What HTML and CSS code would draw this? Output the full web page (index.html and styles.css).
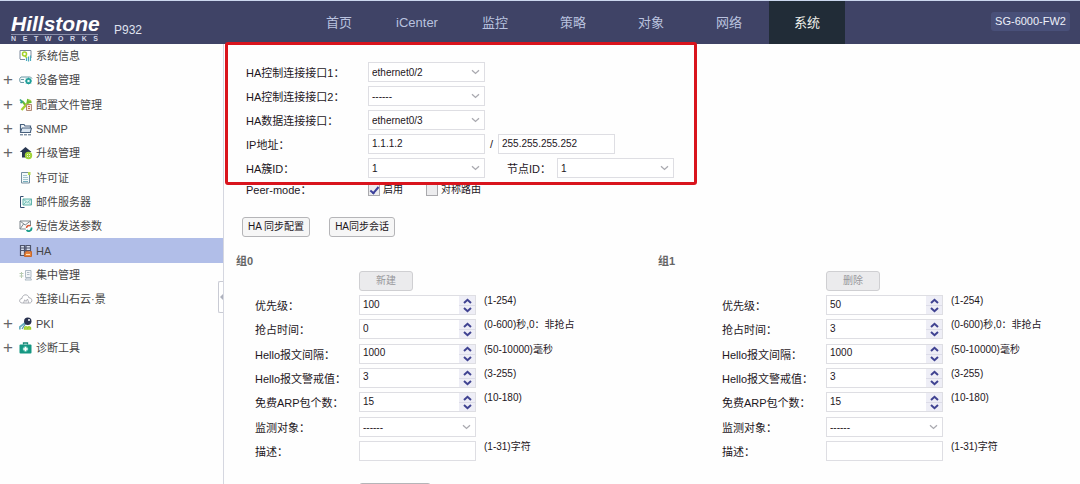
FILE: index.html
```html
<!DOCTYPE html>
<html lang="zh-CN">
<head>
<meta charset="utf-8">
<title>Hillstone P932</title>
<link rel="stylesheet" href="styles.css">
</head>
<body>
<svg class="defs" aria-hidden="true">
  <symbol id="down" viewBox="0 0 9 6"><path d="M1 1.2 4.5 4.4 8 1.2" fill="none" stroke="#aaaab0" stroke-width="1.3"/></symbol>
  <symbol id="spin-up" viewBox="0 0 9 6"><path d="M1 5 4.500 1.800 8 5" fill="none" stroke="#3f4291" stroke-width="2"/></symbol>
  <symbol id="spin-down" viewBox="0 0 9 6"><path d="M1 1 4.500 4.200 8 1" fill="none" stroke="#3f4291" stroke-width="2"/></symbol>
</svg>

<header class="topbar">
  <div class="brand">
    <div class="logo"><span class="logo-name">Hillstone</span><span class="logo-sub">N E T W O R K S</span></div>
    <span class="model">P932</span>
  </div>
  <nav class="topnav">
    <a href="#">首页</a><a href="#">iCenter</a><a href="#">监控</a><a href="#">策略</a><a href="#">对象</a><a href="#">网络</a><a href="#" class="active">系统</a>
  </nav>
  <span class="device">SG-6000-FW2</span>
</header>

<div class="layout">
  <aside class="sidebar">
    <ul class="menu">
      <li><a href="#"><span class="plus"></span><svg class="icon" viewBox="0 0 14 14"><path d="M1 10V1.500h11V9" fill="#fff" stroke="#7c8a9c"/><path d="M1 10.500h5" stroke="#7c8a9c"/><circle cx="5.500" cy="5" r="2" fill="#fff" stroke="#a4d22a" stroke-width="1.500"/><path d="M6 7 8 9" stroke="#a4d22a" stroke-width="1.500"/><path d="M7.500 12V9M9.500 12.500V7.500M11.500 12V6.500" stroke="#4ba9bd" stroke-width="1.200"/></svg>系统信息</a></li>
      <li><a href="#"><span class="plus">+</span><svg class="icon" viewBox="0 0 14 14"><path d="M5 9.500H1.500L.8 8V5.500L2 4h9.500l1.500 1.500" fill="#f5fbfc" stroke="#6c99a5"/><path d="M2 6.500h3" stroke="#6c99a5"/><circle cx="9.500" cy="8" r="2.300" fill="#fff" stroke="#1e9e98" stroke-width="1.600"/><path d="M9.500 4.500v7M6 8h7M7 5.500l5 5M12 5.500l-5 5" stroke="#1e9e98" stroke-width=".7"/><circle cx="9.500" cy="8" r="1" fill="#fff"/></svg>设备管理</a></li>
      <li><a href="#"><span class="plus">+</span><svg class="icon" viewBox="0 0 14 14"><path d="m3 3 7 8" stroke="#67b936" stroke-width="2"/><path d="M1 1.500 3 3.700 1.500 5" fill="none" stroke="#36a48a" stroke-width="1.800"/><path d="m11.500 2-9 10" stroke="#a8cf31" stroke-width="2.400"/><path d="M9 1 8.500 4.500 12.500 4" fill="none" stroke="#6fba30" stroke-width="1.800"/><path d="M7.500 6.500h5v6h-5z" fill="#f7e6dc" stroke="#b18976"/><path d="M9 8.500h2M9 10.500h2" stroke="#c86d45"/></svg>配置文件管理</a></li>
      <li><a href="#"><span class="plus">+</span><svg class="icon" viewBox="0 0 14 14"><path d="M1.500 10.500v-8H5L6 4h5.500v6.500z" fill="#f3f7fb" stroke="#48617e" stroke-width="1.200"/><path d="M3 6h9.500l-1.300 4.500H1.500z" fill="#dbe6f1" stroke="#48617e"/><path d="M1 12.800h3m1 0h3m1 0h3" stroke="#48617e"/></svg>SNMP</a></li>
      <li><a href="#"><span class="plus">+</span><svg class="icon" viewBox="0 0 14 14"><path d="M6.500 1 .8 6H3v5.500h6V6h3.500z" fill="#293751"/><circle cx="9.500" cy="9.500" r="2.700" fill="#fff" stroke="#a1d338" stroke-width="2"/><path d="M9.500 8v3M8 9.500h3" stroke="#a1d338"/></svg>升级管理</a></li>
      <li><a href="#"><span class="plus"></span><svg class="icon" viewBox="0 0 14 14"><path d="M2.500 1.500h8v10.500h-8z" fill="#f3f9fa" stroke="#748e9f"/><path d="M4 4.500h4M4 6.500h5M4 8.500h5" stroke="#a3c5cc"/><path d="M9 2.500h2.500" stroke="#b1d754" stroke-width="3"/><path d="M4 10.500h5" stroke="#76aebd"/></svg>许可证</a></li>
      <li><a href="#"><span class="plus"></span><svg class="icon" viewBox="0 0 14 14"><path d="M4.500 1.500h-3v11h4" fill="none" stroke="#354e71"/><path d="M4 4h8.500v6H4z" fill="#d9f1ed" stroke="#61b4ac"/><path d="m4 4 4.300 3.500L12.500 4M4 10l3-3m5.500 3-3-3" fill="none" stroke="#61b4ac" stroke-width=".8"/></svg>邮件服务器</a></li>
      <li><a href="#"><span class="plus"></span><svg class="icon" viewBox="0 0 14 14"><path d="M1 2h10.500v8H1z" fill="#fafafa" stroke="#7e878d"/><path d="m1 2 5.200 4L11.500 2M1 10l3.500-5" fill="none" stroke="#7e878d"/><circle cx="9.800" cy="9.500" r="3" fill="#fff"/><path d="M7.500 9a2.500 2.500 0 0 1 4-2" fill="none" stroke="#d65b38" stroke-width="1.500"/><path d="M12.300 8.500a2.700 2.700 0 0 1-4.700 2.500" fill="none" stroke="#189c8a" stroke-width="1.800"/></svg>短信发送参数</a></li>
      <li><a href="#" class="current"><span class="plus"></span><svg class="icon" viewBox="0 0 14 14"><path d="M1.500 1.500h4v10h-4zM7 1.500h4.500v8H7z" fill="#d6dded" stroke="#4e546c" stroke-width="1.200"/><path d="M1.500 4h10M1.500 6.500h10" stroke="#4e546c"/><path d="M6 8.500 8 7l2 1 2.500-.5v5H5.500z" fill="#e8843c" stroke="#c5682e"/><path d="M7 10.500h4" stroke="#ffe0b8"/></svg>HA</a></li>
      <li><a href="#"><span class="plus"></span><svg class="icon" viewBox="0 0 14 14"><path d="M.5 5.500h4M.5 8h4M2.500 4v6" stroke="#b8ccb2"/><path d="M6.500 2.500H12v7H6.500zM8 4.500h2.500M8 6.500h2.500M6 12l1.500-2h4l1 2z" fill="#f2f5f7" stroke="#a7b5bf" stroke-width=".9"/></svg>集中管理</a></li>
      <li><a href="#"><span class="plus"></span><svg class="icon" viewBox="0 0 14 14"><path d="M3.500 11C-.5 11 0 6.500 3 6.500 3.500 1.500 9.500 2 9.800 5.700 13.500 5.500 14 11 10.500 11z" fill="#fff" stroke="#abadb4"/><path d="m4.500 11 1.200-3.200L7 9.500 8.500 7l1.300 4" fill="none" stroke="#abadb4" stroke-width=".9"/></svg>连接山石云·景</a></li>
      <li><a href="#"><span class="plus">+</span><svg class="icon" viewBox="0 0 14 14"><path d="M6.500 5.500.8 10v2.500" fill="none" stroke="#69aebf" stroke-width="1.800"/><path d="m7 6-4 6" stroke="#5795ab" stroke-width="1.300"/><circle cx="8.800" cy="4.200" r="3.700" fill="#29314f"/><circle cx="10" cy="3" r="1" fill="#fff"/><path d="M5.500 12c0-3 2.500-2.500 3-1 1-2 3.500-1 3 1z" fill="#eff8d2" stroke="#a2ce2c" stroke-width="1.500"/></svg>PKI</a></li>
      <li><a href="#"><span class="plus">+</span><svg class="icon" viewBox="0 0 14 14"><path d="M4.500 3.500V2h4v1.500" fill="none" stroke="#168876" stroke-width="1.300"/><rect x=".5" y="3.500" width="12" height="9" rx="1" fill="#159782"/><circle cx="6.500" cy="8" r="2.800" fill="#50bda9"/><path d="M6.500 5.800v4.400M4.300 8h4.400" stroke="#fff" stroke-width="1.600"/></svg>诊断工具</a></li>
    </ul>
    <button class="collapse" type="button" aria-label="收起"><svg viewBox="0 0 3 6"><path d="M3 0 0 3l3 3z" fill="#aeb1bd"/></svg></button>
  </aside>

  <main class="content">
    <form>
      <section class="ha">
        <div class="ha-row"><label for="c1">HA控制连接接口1：</label><span class="pick"><select id="c1"><option>ethernet0/2</option></select><svg><use href="#down"/></svg></span></div>
        <div class="ha-row"><label for="c2">HA控制连接接口2：</label><span class="pick"><select id="c2"><option>------</option></select><svg><use href="#down"/></svg></span></div>
        <div class="ha-row"><label for="d1">HA数据连接接口：</label><span class="pick"><select id="d1"><option>ethernet0/3</option></select><svg><use href="#down"/></svg></span></div>
        <div class="ha-row"><label for="ip">IP地址：</label><input class="box" id="ip" type="text" value="1.1.1.2"><span class="slash">/</span><input class="box" type="text" aria-label="子网掩码" value="255.255.255.252"></div>
        <div class="ha-row"><label for="cluster">HA簇ID：</label><span class="pick"><select id="cluster"><option>1</option></select><svg><use href="#down"/></svg></span><label class="node" for="node">节点ID：</label><span class="pick"><select id="node"><option>1</option></select><svg><use href="#down"/></svg></span></div>
        <div class="ha-row peer"><span class="caption">Peer-mode：</span><label class="tick"><input type="checkbox" checked>启用</label><label class="tick"><input type="checkbox">对称路由</label></div>
      </section>

      <div class="actions"><button type="button">HA 同步配置</button><button type="button">HA同步会话</button></div>

      <div class="groups">
        <section class="group">
          <h2>组0</h2>
          <button class="edit" type="button" disabled>新建</button>
          <div class="fields">
            <div class="field"><label for="a1">优先级：</label><span class="spin"><input id="a1" type="text" value="100"><button type="button" aria-label="增加"><svg><use href="#spin-up"/></svg></button><button type="button" aria-label="减少"><svg><use href="#spin-down"/></svg></button></span><span class="hint">(1-254)</span></div>
            <div class="field"><label for="a2">抢占时间：</label><span class="spin"><input id="a2" type="text" value="0"><button type="button" aria-label="增加"><svg><use href="#spin-up"/></svg></button><button type="button" aria-label="减少"><svg><use href="#spin-down"/></svg></button></span><span class="hint">(0-600)秒,0：非抢占</span></div>
            <div class="field"><label for="a3">Hello报文间隔：</label><span class="spin"><input id="a3" type="text" value="1000"><button type="button" aria-label="增加"><svg><use href="#spin-up"/></svg></button><button type="button" aria-label="减少"><svg><use href="#spin-down"/></svg></button></span><span class="hint">(50-10000)毫秒</span></div>
            <div class="field"><label for="a4">Hello报文警戒值：</label><span class="spin"><input id="a4" type="text" value="3"><button type="button" aria-label="增加"><svg><use href="#spin-up"/></svg></button><button type="button" aria-label="减少"><svg><use href="#spin-down"/></svg></button></span><span class="hint">(3-255)</span></div>
            <div class="field"><label for="a5">免费ARP包个数：</label><span class="spin"><input id="a5" type="text" value="15"><button type="button" aria-label="增加"><svg><use href="#spin-up"/></svg></button><button type="button" aria-label="减少"><svg><use href="#spin-down"/></svg></button></span><span class="hint">(10-180)</span></div>
            <div class="field"><label for="a6">监测对象：</label><span class="pick"><select id="a6"><option>------</option></select><svg><use href="#down"/></svg></span></div>
            <div class="field"><label for="a7">描述：</label><input class="box" id="a7" type="text"><span class="hint">(1-31)字符</span></div>
          </div>
          <button class="submit" type="button" aria-label="确定"></button>
        </section>
        <section class="group second">
          <h2>组1</h2>
          <button class="edit" type="button" disabled>删除</button>
          <div class="fields">
            <div class="field"><label for="b1">优先级：</label><span class="spin"><input id="b1" type="text" value="50"><button type="button" aria-label="增加"><svg><use href="#spin-up"/></svg></button><button type="button" aria-label="减少"><svg><use href="#spin-down"/></svg></button></span><span class="hint">(1-254)</span></div>
            <div class="field"><label for="b2">抢占时间：</label><span class="spin"><input id="b2" type="text" value="3"><button type="button" aria-label="增加"><svg><use href="#spin-up"/></svg></button><button type="button" aria-label="减少"><svg><use href="#spin-down"/></svg></button></span><span class="hint">(0-600)秒,0：非抢占</span></div>
            <div class="field"><label for="b3">Hello报文间隔：</label><span class="spin"><input id="b3" type="text" value="1000"><button type="button" aria-label="增加"><svg><use href="#spin-up"/></svg></button><button type="button" aria-label="减少"><svg><use href="#spin-down"/></svg></button></span><span class="hint">(50-10000)毫秒</span></div>
            <div class="field"><label for="b4">Hello报文警戒值：</label><span class="spin"><input id="b4" type="text" value="3"><button type="button" aria-label="增加"><svg><use href="#spin-up"/></svg></button><button type="button" aria-label="减少"><svg><use href="#spin-down"/></svg></button></span><span class="hint">(3-255)</span></div>
            <div class="field"><label for="b5">免费ARP包个数：</label><span class="spin"><input id="b5" type="text" value="15"><button type="button" aria-label="增加"><svg><use href="#spin-up"/></svg></button><button type="button" aria-label="减少"><svg><use href="#spin-down"/></svg></button></span><span class="hint">(10-180)</span></div>
            <div class="field"><label for="b6">监测对象：</label><span class="pick"><select id="b6"><option>------</option></select><svg><use href="#down"/></svg></span></div>
            <div class="field"><label for="b7">描述：</label><input class="box" id="b7" type="text"><span class="hint">(1-31)字符</span></div>
          </div>
        </section>
      </div>
    </form>
  </main>
</div>
</body>
</html>
```
FILE: styles.css
```css
*, *::before, *::after { box-sizing: border-box; }

body {
  margin: 0;
  height: 100vh;
  display: flex;
  flex-direction: column;
  overflow: hidden;
  background: #fefefe;
  color: #1d161c;
  font: 11px/20px "Liberation Sans", "Noto Sans CJK SC", sans-serif;
}

button, input, select { font: inherit; color: inherit; margin: 0; }
a { color: inherit; text-decoration: none; }
.defs { display: none; }

/* Top bar */
.topbar {
  flex: none;
  height: 44px;
  display: flex;
  background: #3f4366;
  border-top: 1px solid #cbd7ee;
}
.brand {
  width: 301px;
  padding-left: 11px;
  display: flex;
  gap: 16px;
  color: #fff;
}
.logo { padding-top: 13px; width: 87px; }
.logo-name {
  display: block;
  font-size: 21px;
  line-height: 20px;
  font-weight: bold;
  font-style: italic;
}
.logo-sub {
  display: block;
  font-size: 7px;
  line-height: 7px;
  font-weight: bold;
  text-align-last: justify;
  color: #d3d7e6;
  border-top: 1px solid #8b90ab;
}
.model { font-size: 12px; line-height: 16px; padding-top: 21px; color: #dfe2ee; }
.topnav { display: flex; gap: 2px; font-size: 13px; line-height: 43px; color: #b9c2df; }
.topnav a { width: 76px; text-align: center; }
.topnav .active { background: #212c37; color: #f1f1ec; }
.device {
  margin: 11px 10px 0 auto;
  height: 19px;
  line-height: 19px;
  padding: 0 4px;
  border-radius: 3px;
  background: #495079;
  color: #eef0fa;
}

/* Sidebar */
.layout { flex: 1; min-height: 0; display: flex; }
.sidebar {
  position: relative;
  flex: none;
  width: 224px;
  border-right: 1px solid #d5d7e0;
}
.menu {
  height: 316px;
  margin: 0;
  padding: 0;
  list-style: none;
  display: grid;
  grid-auto-rows: 1fr;
  color: #454545;
}
.menu a { height: 100%; display: flex; align-items: center; padding-left: 3px; }
.menu .current { background: #b1bee8; }
.plus { width: 16px; font-size: 17px; color: #666; }
.icon { width: 14px; height: 14px; margin-right: 3px; }
.collapse {
  position: absolute;
  right: 0;
  top: 237px;
  width: 5px;
  height: 32px;
  padding: 0;
  display: grid;
  place-items: center;
  background: #fff;
  border: 1px solid #c9cbd4;
  border-right: 0;
  border-radius: 2px 0 0 2px;
}
.collapse svg { width: 3px; height: 6px; }

/* Controls */
.box, .pick, .spin {
  width: 117px;
  height: 20px;
  border: 1px solid #dedee3;
  background: #fff;
  font-size: 10px;
}
.box { padding: 0 3px 1px; }
.pick { display: grid; grid-template-columns: 1fr 17px; align-items: center; }
.pick select {
  grid-area: 1 / 1 / 2 / 3;
  height: 18px;
  padding: 0 3px 1px;
  border: 0;
  appearance: none;
  background: transparent;
}
.pick svg { grid-area: 1 / 2; width: 9px; height: 6px; margin-left: 4px; pointer-events: none; }
.spin { display: grid; grid-template: 9px 9px / 1fr 16px; }
.spin input { grid-row: 1 / 3; width: 100%; height: 18px; padding: 0 3px 1px; border: 0; background: transparent; }
.spin button { grid-column: 2; padding: 0; border: 0; background: #eeeef6; display: grid; place-items: center; }
.spin button + button { border-top: 1px solid #dcdce8; }
.spin svg { width: 9px; height: 6px; }

/* HA settings */
.content { flex: 1; min-width: 0; }
.ha {
  position: relative;
  padding: 18px 0 0 22px;
  display: flex;
  flex-direction: column;
  gap: 4px;
}
.ha::after {
  content: "";
  position: absolute;
  left: 1px;
  top: -2px;
  width: 472px;
  height: 143px;
  border: 3px solid #d9141d;
  border-radius: 3px;
  pointer-events: none;
}
.ha-row { display: flex; height: 20px; }
.ha-row > label:first-child, .caption { width: 122px; line-height: 22px; }
.slash { width: 13px; text-align: center; }
.ha-row .node { width: 72px; padding-left: 22px; line-height: 22px; }
.peer .caption { line-height: 16px; }
.ha-row.peer { height: 16px; }
.tick { display: flex; align-items: center; gap: 3px; width: 58px; line-height: 14px; white-space: nowrap; font-size: 10px; }
.tick input {
  appearance: none;
  width: 12px;
  height: 12px;
  border: 1px solid #a9a9ad;
  background: #ececee;
  display: flex;
  justify-content: center;
  align-items: flex-start;
}
.tick input:checked::before {
  content: "";
  flex: none;
  width: 5px;
  height: 9px;
  border: solid #3c419b;
  border-width: 0 2px 2px 0;
  transform: rotate(40deg);
}

.actions { display: flex; gap: 19px; padding: 19px 0 0 18px; }
.actions button, .edit, .submit {
  height: 20px;
  padding: 0 5px;
  font-size: 10px;
  line-height: 18px;
  border: 1px solid #b5b5b8;
  border-radius: 3px;
  background: #f6f6f6;
}

/* Priority groups */
.groups { display: grid; grid-template-columns: 422px 1fr; padding: 15px 0 0 12px; }
.group { --indent: 19px; }
.second { --indent: 64px; }
.group h2 { margin: 0; font-size: 11px; line-height: 19px; color: #666; }
.edit {
  display: block;
  width: 54px;
  margin-left: calc(var(--indent) + 104px);
  border-color: #cfcfd2;
  background: #ebebed;
  color: #98989c;
}
.fields {
  height: 166px;
  margin: 4px 0 0 var(--indent);
  display: grid;
  align-content: space-between;
}
.field { display: flex; height: 20px; white-space: nowrap; }
.field > label { width: 104px; line-height: 22px; }
.hint { margin-left: 8px; font-size: 10px; line-height: 12px; }
.submit { display: block; width: 72px; margin: 22px 0 0 123px; }
```
